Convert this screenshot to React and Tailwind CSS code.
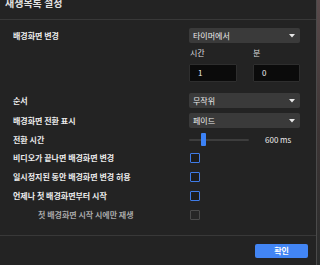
import React from 'react';

const FONT = { fontFamily: '"Noto Sans CJK KR", "Noto Sans", sans-serif' };

const Caret = () => (
    <svg width="6" height="4" viewBox="0 0 6 4" className="shrink-0">
        <path d="M0 0 H6 L3 3.5 Z" fill="#e6e6e6" />
    </svg>
);

const Select = ({ value }) => (
    <div className="w-[111px] h-[15px] rounded-[2px] bg-[#3a3a3a] flex items-center justify-between pl-[4px] pr-[5px] text-[8px] text-[#ececec] leading-none">
        <span>{value}</span>
        <Caret />
    </div>
);

const Check = ({ disabled }) => (
    <div className={disabled
        ? 'w-[10px] h-[10px] rounded-[1px] border-[1.5px] border-[#4a4a4a] bg-[#262626]'
        : 'w-[10px] h-[10px] rounded-[1px] border-[1.5px] border-[#3f7be6] bg-[#1c1c1c]'} />
);

const Row = ({ label, children, className = '' }) => (
    <div className={`flex items-center justify-between ${className}`}>
        <span className="text-[8px] font-bold text-[#ececec] leading-none">{label}</span>
        <div className="w-[111px] flex items-center">{children}</div>
    </div>
);

export default function App() {
    return (
        <div className="w-[320px] h-[265px] flex overflow-hidden bg-[#1b1b1b]" style={FONT}>
            <div className="w-[317px] h-full shrink-0 bg-[#232323] border-r border-[#4a4a4a] flex flex-col">
                {/* header */}
                <div className="h-[20px] border-b border-[#383838] pl-[5px] overflow-hidden">
                    <div className="mt-[-3px] text-[10px] font-bold text-[#e2e2e2] leading-[12px]">재생목록 설정</div>
                </div>

                {/* body */}
                <div className="flex-1 flex flex-col pl-[13px] pr-[16px] pt-[8px]">
                    <Row label="배경화면 변경" className="h-[15px]">
                        <Select value="타이머에서" />
                    </Row>

                    <div className="flex justify-end mt-[5px]">
                        <div className="w-[111px] grid grid-cols-[48px_47px] gap-x-[16px]">
                            <span className="h-[10px] pl-[1px] text-[8px] text-[#dcdcdc] leading-[10px]">시간</span>
                            <span className="h-[10px] text-[8px] text-[#dcdcdc] leading-[10px]">분</span>
                            <div className="mt-[6px] h-[18px] bg-[#0b0b0b] border border-[#2e2e2e] rounded-[1px] flex items-center pl-[8px] text-[8px] text-[#ececec]">1</div>
                            <div className="mt-[6px] h-[18px] bg-[#0b0b0b] border border-[#2e2e2e] rounded-[1px] flex items-center pl-[8px] text-[8px] text-[#ececec]">0</div>
                        </div>
                    </div>

                    <Row label="순서" className="h-[15px] mt-[11px]">
                        <Select value="무작위" />
                    </Row>

                    <Row label="배경화면 전환 표시" className="h-[15px] mt-[5px]">
                        <Select value="페이드" />
                    </Row>

                    <Row label="전환 시간" className="h-[14px] mt-[5px]">
                        <div className="relative w-[60px] h-[14px] flex items-center">
                            <div className="w-full h-[2px] bg-[#3d3d3d] rounded-full" />
                            <div className="absolute left-[12px] top-0 w-[5px] h-[13px] rounded-[1px] bg-[#3c82f6]" />
                        </div>
                        <span className="ml-[16px] text-[8px] text-[#ececec] leading-none">600 ms</span>
                    </Row>

                    <div className="mt-[1px] flex flex-col">
                        <Row label="비디오가 끝나면 배경화면 변경" className="h-[19px]">
                            <div className="pl-[1px]"><Check /></div>
                        </Row>
                        <Row label="일시정지된 동안 배경화면 변경 허용" className="h-[19px]">
                            <div className="pl-[1px]"><Check /></div>
                        </Row>
                        <Row label="언제나 첫 배경화면부터 시작" className="h-[19px]">
                            <div className="pl-[1px]"><Check /></div>
                        </Row>
                        <div className="h-[19px] flex items-center justify-between">
                            <span className="pl-[25px] text-[8px] font-bold text-[#a8a8a8] leading-none">첫 배경화면 시작 시에만 재생</span>
                            <div className="w-[111px] pl-[1px]"><Check disabled /></div>
                        </div>
                    </div>
                </div>

                {/* footer */}
                <div className="h-[30px] border-t border-[#383838] flex justify-end pt-[8px] pr-[8px]">
                    <button className="w-[53px] h-[14px] rounded-[2px] bg-[#4285f4] text-[8px] font-bold text-white leading-none">확인</button>
                </div>
            </div>
            <div className="flex-1 bg-gradient-to-b from-[#5a4b4c] via-[#3d3535] to-[#2a2c2c]" />
        </div>
    );
}
